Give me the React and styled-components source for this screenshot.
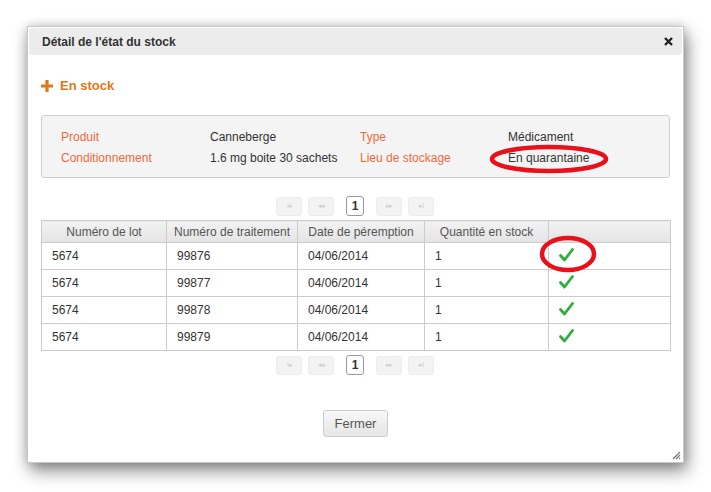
import React from 'react'
import styled, { createGlobalStyle } from 'styled-components'

const GlobalStyle = createGlobalStyle`
  html, body { margin: 0; padding: 0; background: #fff; }
  body { font-family: "Liberation Sans", Arial, sans-serif; font-size: 12px; color: #333; }
`

const Page = styled.div`
  padding: 26px 0 0 27px;
  height: 492px;
  box-sizing: border-box;
`

const Dialog = styled.div`
  position: relative;
  width: 657px;
  height: 437px;
  box-sizing: border-box;
  background: #fff;
  border: 1px solid #c8c8c8;
  box-shadow: 3px 8px 16px rgba(0, 0, 0, 0.45), 0 0 10px rgba(0, 0, 0, 0.18);
  display: flex;
  flex-direction: column;
`

const TitleBar = styled.div`
  margin: 1px;
  height: 27px;
  background: #ececec;
  border-radius: 3px;
  display: flex;
  align-items: center;
  justify-content: space-between;
  padding: 0 9px 0 13px;
`

const Title = styled.span`
  font-weight: bold;
  font-size: 12px;
  color: #333;
`

const Content = styled.div`
  padding: 0 13px;
  display: flex;
  flex-direction: column;
`

const SectionTitle = styled.div`
  margin-top: 22px;
  display: flex;
  align-items: center;
  gap: 7px;
  color: #e07716;
  font-weight: bold;
  font-size: 13px;
  line-height: 16px;
`

const InfoBox = styled.div`
  margin-top: 21px;
  background: #f4f4f4;
  border: 1px solid #cfcfcf;
  border-radius: 3px;
  padding: 10px 19px 9px;
  display: grid;
  grid-template-columns: 149px 150px 148px auto;
  grid-auto-rows: 21px;
  align-items: center;
`

const Label = styled.span`
  color: #f06a3a;
`

const Value = styled.span`
  color: #333;
`

const Pager = styled.div`
  margin-top: ${p => p.$top}px;
  display: flex;
  justify-content: center;
  align-items: center;
  gap: 6px;
  height: 20px;
  padding-right: 1px;
`

const PagerBtn = styled.span`
  width: 26px;
  height: 19px;
  border-radius: 3px;
  background: #f3f3f3;
  border: 1px solid #ececec;
  box-sizing: border-box;
  color: #cfcfcf;
  font-size: 7px;
  display: flex;
  align-items: center;
  justify-content: center;
  letter-spacing: -1px;
`

const PageNum = styled.span`
  margin: 0 6px;
  width: 18px;
  height: 20px;
  box-sizing: border-box;
  border: 1px solid #9a9a9a;
  border-radius: 3px;
  background: #fff;
  font-weight: bold;
  font-size: 12px;
  color: #333;
  display: flex;
  align-items: center;
  justify-content: center;
`

const Table = styled.table`
  margin-top: 4px;
  width: 630px;
  border-collapse: collapse;
  table-layout: fixed;
`

const Th = styled.th`
  height: 21px;
  padding: 0;
  border: 1px solid #cccccc;
  background: linear-gradient(#f2f2f2, #e4e4e4);
  font-weight: normal;
  color: #555;
  text-align: center;
`

const Td = styled.td`
  height: 26px;
  padding: 0 0 0 10px;
  border: 1px solid #cccccc;
  color: #333;
`

const Footer = styled.div`
  margin-top: 35px;
  display: flex;
  justify-content: center;
`

const Button = styled.button`
  width: 65px;
  height: 27px;
  border: 1px solid #cdcdcd;
  border-radius: 3px;
  background: linear-gradient(#f7f7f7, #e6e6e6);
  font-family: "Liberation Sans", Arial, sans-serif;
  font-size: 13px;
  color: #555;
`

const Resize = styled.svg`
  position: absolute;
  right: 2px;
  bottom: 2px;
`

const Annotation = styled.svg`
  position: absolute;
  left: ${p => p.$x}px;
  top: ${p => p.$y}px;
  overflow: visible;
`

const Check = () => (
  <svg width="15" height="14" viewBox="0 0 15 14">
    <path d="M1.5 7.5 L5.5 12 L13.5 1.5" fill="none" stroke="#2fae3c" strokeWidth="2.8" strokeLinecap="round" strokeLinejoin="round" />
  </svg>
)

const rows = ['99876', '99877', '99878', '99879']

function Pagination({ top }) {
  return (
    <Pager $top={top}>
      <PagerBtn>I◂</PagerBtn>
      <PagerBtn>◂◂</PagerBtn>
      <PageNum>1</PageNum>
      <PagerBtn>▸▸</PagerBtn>
      <PagerBtn>▸I</PagerBtn>
    </Pager>
  )
}

export default function App() {
  return (
    <Page>
      <GlobalStyle />
      <Dialog>
        <TitleBar>
          <Title>Détail de l'état du stock</Title>
          <svg width="9" height="9" viewBox="0 0 9 9">
            <path d="M1 1 L8 8 M8 1 L1 8" stroke="#222" strokeWidth="2.4" />
          </svg>
        </TitleBar>
        <Content>
          <SectionTitle>
            <svg width="12" height="12" viewBox="0 0 12 12">
              <path d="M6 0 V12 M0 6 H12" stroke="#e07716" strokeWidth="3.2" />
            </svg>
            En stock
          </SectionTitle>
          <InfoBox>
            <Label>Produit</Label>
            <Value>Canneberge</Value>
            <Label>Type</Label>
            <Value>Médicament</Value>
            <Label>Conditionnement</Label>
            <Value>1.6 mg boite 30 sachets</Value>
            <Label>Lieu de stockage</Label>
            <Value>En quarantaine</Value>
          </InfoBox>
          <Pagination top={18} />
          <Table>
            <colgroup>
              <col style={{ width: 125 }} />
              <col style={{ width: 131 }} />
              <col style={{ width: 127 }} />
              <col style={{ width: 124 }} />
              <col />
            </colgroup>
            <thead>
              <tr>
                <Th>Numéro de lot</Th>
                <Th>Numéro de traitement</Th>
                <Th>Date de péremption</Th>
                <Th>Quantité en stock</Th>
                <Th></Th>
              </tr>
            </thead>
            <tbody>
              {rows.map(r => (
                <tr key={r}>
                  <Td>5674</Td>
                  <Td>{r}</Td>
                  <Td>04/06/2014</Td>
                  <Td>1</Td>
                  <Td><Check /></Td>
                </tr>
              ))}
            </tbody>
          </Table>
          <Pagination top={4} />
          <Footer>
            <Button>Fermer</Button>
          </Footer>
        </Content>
        <Resize width="10" height="10" viewBox="0 0 10 10">
          <path d="M9 2 L2 9 M9 5 L5 9 M9 8 L8 9" stroke="#777" strokeWidth="1.2" />
        </Resize>
        <Annotation $x={463} $y={119} width="116" height="26">
          <ellipse cx="58" cy="13" rx="57" ry="12" fill="none" stroke="#e8101a" strokeWidth="4.5" />
        </Annotation>
        <Annotation $x={513} $y={210} width="54" height="34">
          <ellipse cx="27" cy="17" rx="26" ry="16" fill="none" stroke="#e8101a" strokeWidth="4.5" />
        </Annotation>
      </Dialog>
    </Page>
  )
}
